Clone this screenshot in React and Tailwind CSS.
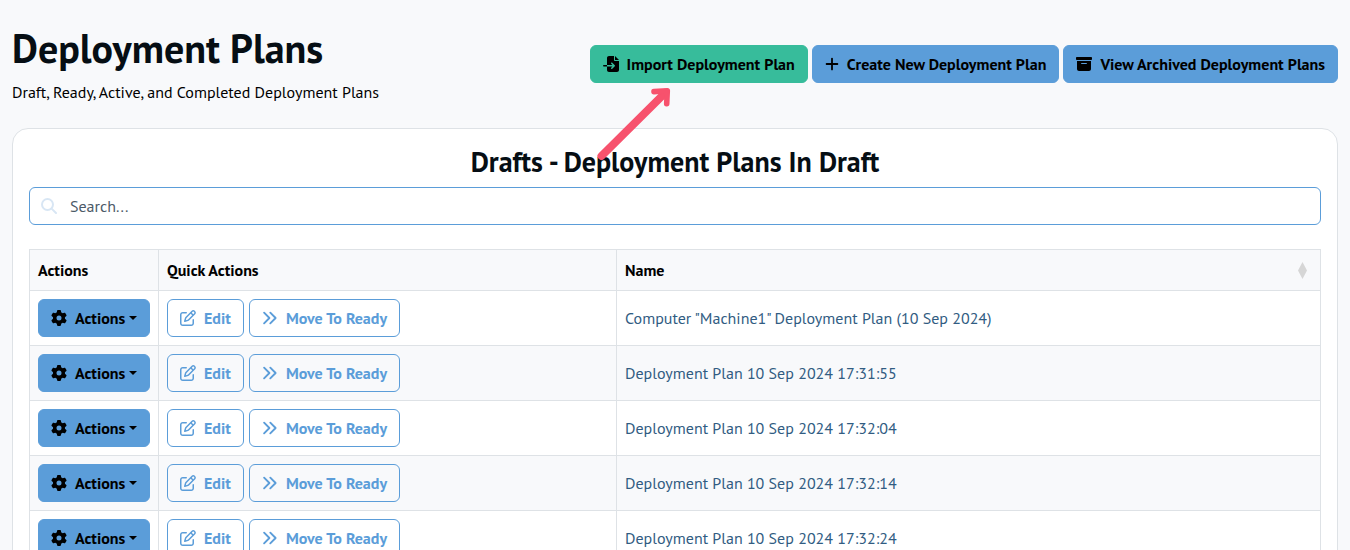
import { FaBoxArchive, FaFileImport, FaGear, FaRegPenToSquare } from "react-icons/fa6";

const plans = [
  'Computer "Machine1" Deployment Plan (10 Sep 2024)',
  "Deployment Plan 10 Sep 2024 17:31:55",
  "Deployment Plan 10 Sep 2024 17:32:04",
  "Deployment Plan 10 Sep 2024 17:32:14",
  "Deployment Plan 10 Sep 2024 17:32:24",
];

function PlusIcon() {
  return (
    <svg className="h-4 w-3.5 shrink-0" viewBox="0 0 14 16" fill="none" stroke="currentColor" strokeWidth="1.8" strokeLinecap="round">
      <path d="M7 2.6v10.8M1.6 8h10.8" />
    </svg>
  );
}

function ChevronsIcon() {
  return (
    <svg className="size-4 shrink-0" viewBox="0 0 16 16" fill="none" stroke="currentColor" strokeWidth="1.9" strokeLinecap="round" strokeLinejoin="round">
      <path d="M2.1 2.7 7.4 8l-5.3 5.3M8.3 2.7 13.6 8l-5.3 5.3" />
    </svg>
  );
}

function SearchIcon() {
  return (
    <svg className="size-4 shrink-0 text-[#d8e6f4]" viewBox="0 0 16 16" fill="none" stroke="currentColor" strokeWidth="2" strokeLinecap="round">
      <circle cx="6.5" cy="6.5" r="5.5" />
      <path d="m10.6 10.6 4.4 4.4" />
    </svg>
  );
}

function Button({ tone, icon, caret, children }) {
  const tones = {
    primary: "border-[#5b9dd9] bg-[#5b9dd9] text-black",
    success: "border-[#37bc9b] bg-[#37bc9b] text-black",
    outline: "border-[#5b9dd9] text-[#5b9dd9]",
  };
  return (
    <button className={`flex h-[38px] items-center gap-2 rounded-md border px-3 font-bold leading-6 whitespace-nowrap ${tones[tone]}`}>
      {icon}
      <span className="flex items-center gap-1">
        {children}
        {caret && <span className="border-x-4 border-t-4 border-x-transparent border-t-black" />}
      </span>
    </button>
  );
}

export default function App() {
  return (
    <div className="relative h-[550px] overflow-hidden bg-[#f8f9fb] px-3 font-['PT_Sans','Noto_Sans',sans-serif] text-base leading-6 text-[#060e14]">
      <header className="flex items-start justify-between pt-6">
        <div>
          <h1 className="text-[40px] leading-[48px] font-bold">Deployment Plans</h1>
          <p className="mt-2 text-black">Draft, Ready, Active, and Completed Deployment Plans</p>
        </div>
        <div className="mt-[21px] flex gap-1">
          <Button tone="success" icon={<FaFileImport className="size-4 shrink-0" />}>Import Deployment Plan</Button>
          <Button tone="primary" icon={<PlusIcon />}>Create New Deployment Plan</Button>
          <Button tone="primary" icon={<FaBoxArchive className="size-4 shrink-0" />}>View Archived Deployment Plans</Button>
        </div>
      </header>

      <main className="mt-6 h-[600px] rounded-2xl border border-[#dee2e6] bg-white p-4">
        <h2 className="h-[34px] text-center text-[28px] leading-[34px] font-bold">Drafts - Deployment Plans In Draft</h2>
        <div className="mt-2 flex h-[38px] items-center gap-[13px] rounded-md border border-[#5b9dd9] px-[11px] text-[#4c5a68]">
          <SearchIcon />
          <span>Search...</span>
        </div>

        <table className="mt-6 w-full table-fixed border-collapse">
          <colgroup>
            <col className="w-[129px]" />
            <col className="w-[458px]" />
            <col />
          </colgroup>
          <thead>
            <tr className="h-[41px] bg-[#f8f9fb] text-left text-black">
              <th className="border border-[#dee2e6] px-2">Actions</th>
              <th className="border border-[#dee2e6] px-2">Quick Actions</th>
              <th className="border border-[#dee2e6] px-2">
                <div className="flex items-center justify-between pr-[5px]">
                  Name
                  <svg className="h-[17px] w-[9px] text-[#d6d6d6]" viewBox="0 0 9 17" fill="currentColor">
                    <path d="M4.5 0 9 8.5 4.5 17 0 8.5Z" />
                  </svg>
                </div>
              </th>
            </tr>
          </thead>
          <tbody>
            {plans.map((name) => (
              <tr key={name} className="h-[55px] even:bg-[#f8f9fb]">
                <td className="border border-[#dee2e6] px-2">
                  <div className="flex">
                    <Button tone="primary" caret icon={<FaGear className="size-4 shrink-0" />}>Actions</Button>
                  </div>
                </td>
                <td className="border border-[#dee2e6] px-2">
                  <div className="flex gap-[5px]">
                    <Button tone="outline" icon={<FaRegPenToSquare className="size-4 shrink-0" />}>Edit</Button>
                    <Button tone="outline" icon={<ChevronsIcon />}>Move To Ready</Button>
                  </div>
                </td>
                <td className="border border-[#dee2e6] px-2 text-[#315c82]">{name}</td>
              </tr>
            ))}
          </tbody>
        </table>
      </main>

      <svg className="pointer-events-none absolute top-20 left-[590px] h-[90px] w-[100px]" viewBox="0 0 100 90" fill="none" stroke="#f7526d" strokeLinecap="round" strokeLinejoin="round">
        <path d="M11.5 76 75 13" strokeWidth="8" />
        <path d="M64 11.6 77.3 10.7 76.7 23.7" strokeWidth="5.6" />
      </svg>
    </div>
  );
}
